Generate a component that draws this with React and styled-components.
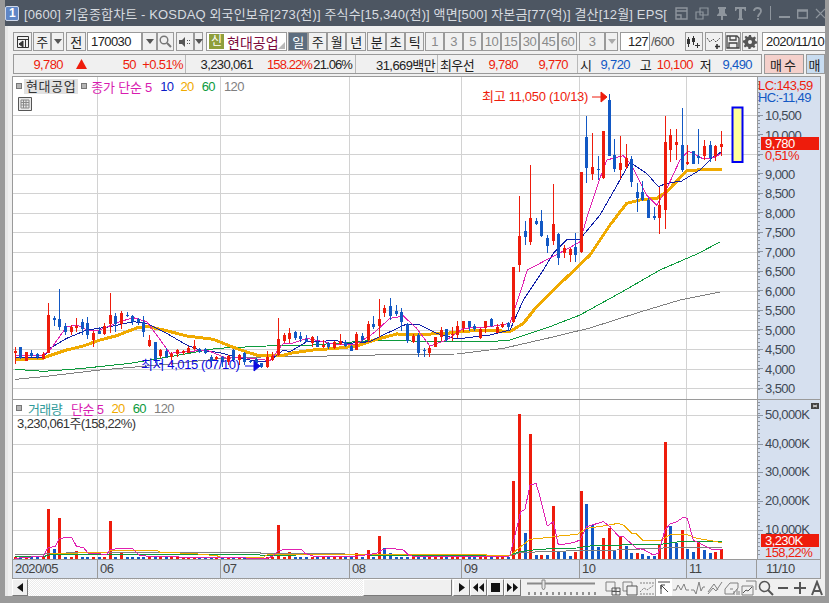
import React from 'react';
import styled, {createGlobalStyle} from 'styled-components';

const FONT = `"Liberation Sans", "Noto Sans CJK KR", sans-serif`;

const GlobalStyle = createGlobalStyle`
  html, body { margin: 0; padding: 0; background: #9a9a9a; }
  * { box-sizing: border-box; }
`;

// x, high, top, bottom, low, colour — read off the chart, grouped by crop origin
const CANDLE_GROUPS = [
  {ox: 0, oy: 270, rows: [
    [46,232,243,248,283,'r'],[61,230,232,265,268,'b'],[79,245,247,272,272,'r'],[94,240,250,258,262,'b'],[112,250,253,262,266,'b'],
    [130,245,252,266,268,'r'],[145,99,135,248,250,'r'],[163,138,144,150,168,'b'],[178,57,147,172,180,'b'],[196,158,167,186,195,'b'],
    [214,165,172,186,195,'r'],[229,145,168,175,187,'r'],[247,148,156,178,195,'b'],[262,142,159,196,207,'b'],[280,182,189,210,232,'r'],
    [298,172,183,192,192,'b'],[313,160,167,193,195,'r'],[331,69,136,163,190,'r'],[346,128,138,163,185,'b'],[364,124,129,163,178,'r'],
    [382,126,136,138,142,'b'],[397,135,139,157,165,'b'],[415,145,148,157,165,'b'],[430,138,155,186,200,'b'],[448,195,210,228,230,'r'],
    [466,216,216,272,280,'b'],[481,238,240,258,265,'r'],[499,233,243,262,265,'b'],[514,245,252,262,285,'r'],[532,238,240,253,262,'r'],
    [550,240,243,250,255,'r'],[565,228,235,248,250,'r'],[583,210,228,236,240,'r'],[598,233,236,246,250,'b'],[616,235,238,248,253,'b'],
    [634,254,262,272,290,'b'],[649,258,262,267,270,'r'],[667,258,260,275,290,'b'],[685,255,258,275,285,'r'],[700,238,240,270,275,'b'],
    [718,252,255,270,285,'r'],[733,246,250,277,285,'b'],[751,270,272,275,280,'b'],[769,265,268,280,285,'b'],[784,278,280,290,295,'b'],
    [802,243,262,290,295,'r'],[817,245,258,270,272,'r'],[835,143,207,255,258,'r'],[853,188,195,212,220,'r'],[868,175,190,206,220,'r'],
  ]},
  {ox: 290, oy: 270, rows: [
    [16,182,185,203,210,'b'],[31,186,198,208,216,'b'],[49,196,206,216,216,'b'],[67,198,200,218,232,'r'],[82,198,216,230,232,'b'],
    [100,210,224,230,234,'r'],[115,216,218,232,238,'b'],[133,212,216,234,238,'r'],[151,192,214,222,225,'r'],[166,210,216,228,230,'b'],
    [184,224,228,242,244,'b'],[199,186,192,240,240,'r'],[217,190,198,210,215,'b'],[235,153,162,210,215,'r'],[250,138,162,172,178,'b'],
    [268,87,147,168,200,'r'],[283,105,114,130,140,'r'],[301,84,108,138,150,'b'],[319,105,122,132,138,'b'],[334,114,126,155,183,'b'],
    [352,160,162,214,218,'b'],[370,193,198,216,220,'r'],[385,188,196,250,262,'b'],[403,235,240,243,262,'b'],[418,228,234,250,260,'r'],
    [436,200,202,231,232,'r'],[454,172,180,200,214,'r'],[469,176,178,210,216,'b'],[487,172,192,196,214,'r'],[502,152,168,194,204,'r'],
    [520,152,154,174,186,'r'],[538,153,154,172,182,'b'],[553,162,169,176,184,'b'],[571,174,178,203,207,'r'],[586,154,154,174,190,'r'],
    [604,145,148,168,172,'b'],[622,162,170,188,190,'r'],[637,155,163,172,175,'r'],[655,155,158,172,184,'b'],[670,-9,-9,156,158,'r'],
  ]},
  {ox: 500, oy: 85, rows: [
    [58,333,453,540,560,'r'],[76,408,438,456,480,'b'],[91,240,400,470,480,'r'],[109,400,408,416,420,'b'],[124,376,408,452,455,'b'],
    [142,450,460,482,505,'b'],[160,297,418,468,480,'r'],[175,445,447,520,540,'b'],[193,480,490,505,520,'r'],[211,490,492,510,530,'r'],
    [226,445,487,510,530,'b'],[244,262,262,500,505,'r'],[259,93,155,248,295,'b'],[277,145,245,267,285,'r'],[295,213,252,256,285,'b'],
    [310,138,138,280,282,'r'],[328,28,45,213,213,'b'],[343,162,210,252,262,'b'],[361,153,234,256,282,'r'],[379,178,218,246,252,'r'],
    [394,214,222,292,305,'b'],[412,295,321,340,380,'b'],[427,287,321,345,348,'b'],[445,340,345,398,400,'b'],[463,367,392,400,405,'b'],
    [478,305,360,398,446,'r'],[496,93,172,374,432,'r'],[511,133,150,194,230,'r'],[529,132,171,180,225,'r'],[547,69,180,256,262,'b'],
    [562,180,232,238,240,'r'],[580,198,198,236,238,'b'],[595,132,212,220,236,'b'],[613,165,183,212,225,'r'],[631,168,181,219,232,'b'],
    [646,180,183,214,228,'r'],[664,138,177,186,212,'r'],
  ]},
];

const CANDLES = CANDLE_GROUPS.flatMap(g =>
  g.rows.map(([x, h, t, b, l, c]) => ({
    x: Math.round(g.ox + x / 3),
    h: Math.round(g.oy + h / 3),
    t: Math.round(g.oy + t / 3),
    b: Math.round(g.oy + b / 3),
    l: Math.round(g.oy + l / 3),
    c,
  }))
);

const COLORS = {r: '#ee1c0c', b: '#1258c4'};

const toPoints = (ox, oy, list) => list.map(([x, y]) => `${ox + x / 3},${oy + y / 3}`).join(' ');

const line = (...parts) => parts.map(([ox, oy, list]) => toPoints(ox, oy, list)).join(' ');

const MA5 = line(
  [0, 270, [[46,255],[130,255],[150,240],[200,170],[230,165],[260,180],[300,180],[360,155],[400,143],[440,155],[470,195],[510,250],[560,245],[620,240],[680,265],[720,262],[780,268],[810,272],[850,220]]],
  [290, 270, [[0,222],[50,205],[100,215],[140,225],[200,222],[250,190],[300,145],[340,138],[380,175],[420,228],[470,210],[520,175],[600,170],[660,160],[690,70],[712,0]]],
  [500, 85, [[205,490],[240,470],[260,400],[300,280],[320,225],[370,212],[395,240],[440,330],[470,360],[496,320],[540,225],[565,198],[610,222],[640,218],[665,205]]]
);
const MA10 = line(
  [0, 270, [[46,262],[130,262],[150,235],[200,205],[260,180],[330,170],[400,155],[440,160],[500,190],[560,225],[600,240],[660,248],[720,265],[780,275],[810,272],[850,240]]],
  [290, 270, [[0,245],[50,215],[140,212],[175,220],[240,215],[290,190],[350,162],[390,165],[440,190],[500,207],[600,195],[660,180],[700,90],[760,0]]],
  [500, 85, [[160,505],[200,465],[240,462],[300,390],[390,232],[440,265],[475,305],[500,295],[545,288],[600,255],[640,215],[665,200]]]
);
const MA20 = line(
  [0, 270, [[46,268],[130,265],[145,258],[200,240],[250,228],[300,210],[350,197],[415,172],[445,170],[500,182],[560,198],[640,208],[700,232],[740,246],[780,258],[850,256]]],
  [290, 270, [[0,250],[70,240],[140,235],[200,228],[260,208],[320,192],[400,193],[470,190],[520,184],[600,180],[660,185],[700,160],[740,110],[780,70]]],
  [500, 85, [[270,510],[330,420],[380,355],[420,345],[470,340],[500,320],[560,258],[620,252],[665,252]]]
);
const MA60 = line(
  [0, 270, [[46,298],[130,304],[240,296],[390,280],[510,260],[650,235],[800,228]]],
  [290, 270, [[0,226],[70,225],[240,212],[600,215],[660,210],[780,170]]],
  [0, 0, [[1740,945],[1860,879],[1980,810],[2091,762],[2160,726]]]
);
const MA120 = line(
  [0, 270, [[46,328],[130,320],[300,300],[500,283],[700,262]]],
  [290, 270, [[0,260],[170,257],[340,253],[500,252],[640,235],[780,203]]],
  [0, 0, [[1770,984],[1920,936],[2040,900],[2160,876]]]
);

const V5 = line(
  [0, 390, [[46,505],[130,498],[145,472],[165,470],[178,445],[215,442],[230,470],[250,472],[265,490],[320,493],[330,480],[355,475],[398,476],[420,497],[470,500],[800,505],[820,498],[835,482],[860,478],[905,478],[915,490],[945,500],[1060,500],[1130,490],[1150,478],[1175,475],[1210,480],[1228,497]]],
  [410, 390, [[20,500],[295,500],[300,495],[325,395],[332,365],[345,358],[360,285],[378,280],[390,320],[412,408],[430,395],[445,465],[490,458],[510,450],[530,410],[580,395],[600,410],[625,438],[640,440],[680,475],[700,478],[730,495],[745,490],[765,420],[780,402],[800,395],[820,382],[832,385],[850,450],[880,465],[910,480],[935,478]]]
);
const V20 = line(
  [0, 390, [[150,490],[320,488],[330,483],[400,480],[468,480],[480,487],[570,490],[650,497],[665,503],[790,502],[800,495],[1230,494]]],
  [410, 390, [[205,494],[300,498],[320,480],[360,448],[420,442],[460,436],[500,434],[530,415],[580,408],[625,400],[640,405],[665,430],[680,432],[700,452],[750,452],[780,435],[830,433],[860,445],[905,452],[935,458]]]
);
const V60 = line(
  [0, 390, [[46,500],[130,500],[150,494],[300,494],[500,494],[770,493],[790,497],[990,493],[1230,497]]],
  [410, 390, [[295,497],[330,485],[370,480],[420,476],[500,474],[540,468],[670,464],[760,462],[800,456],[935,455]]]
);
const V120 = line(
  [0, 390, [[46,493],[130,493],[140,490],[320,487],[410,488],[780,488],[780,491],[995,491],[1230,497]]],
  [410, 390, [[300,497],[330,488],[420,484],[620,480],[760,474],[935,472]]]
);

// big volume bars: x, top, colour. everything else is a stub of 2-3px
const BIG_BARS = [
  ...[[145,357,'r'],[163,477,'b'],[178,384,'r'],[229,484,'r'],[331,393,'r'],[364,490,'r'],[835,405,'r'],[868,487,'r'],[1069,490,'r'],[1105,480,'r'],[1138,438,'r'],[1153,475,'b'],[1171,490,'b']]
    .map(([x, t, c]) => [x / 3, Math.round(390 + t / 3), c]),
  ...[[310,273,'r'],[328,72,'r'],[346,429,'b'],[361,132,'r'],[379,495,'b'],[394,495,'r'],[412,495,'b'],[430,348,'r'],[445,485,'b'],[463,485,'b'],[478,497,'b'],[496,485,'r'],[514,303,'r'],[529,342,'b'],[547,405,'b'],[565,470,'b'],[580,444,'r'],[598,413,'r'],[613,482,'b'],[631,438,'r'],[649,467,'b'],[664,489,'b'],[682,489,'r'],[697,492,'b'],[715,497,'b'],[733,497,'b'],[748,464,'r'],[766,156,'r'],[781,408,'b'],[799,459,'b'],[817,420,'r'],[832,477,'b'],[850,486,'b'],[865,456,'r'],[883,480,'b'],[901,489,'b'],[916,486,'r'],[934,477,'r']]
    .map(([x, t, c]) => [410 + x / 3, Math.round(390 + t / 3), c]),
];

const VOLUMES = CANDLES.map(k => {
  const big = BIG_BARS.find(([x]) => Math.abs(x - k.x) < 3);
  return big ? {x: k.x, top: big[1], c: big[2]} : {x: k.x, top: 557, c: k.c};
});

const GRID_X = [97, 220, 349, 461, 579, 686];
const PRICE_TICKS = ['10,500','10,000','9,500','9,000','8,500','8,000','7,500','7,000','6,500','6,000','5,500','5,000','4,500','4,000','3,500'];
const priceY = i => 115 + i * 19.5;
const VOL_TICKS = [[415,'50,000K'],[444,'40,000K'],[472,'30,000K'],[501,'20,000K'],[530,'10,000K']];

const Window = styled.div`
  width: 829px;
  height: 603px;
  overflow: hidden;
  display: flex;
  flex-direction: column;
  background: #f0f0f0;
  border: solid #9a9a9a;
  border-width: 0 4px 7px 5px;
  font-family: ${FONT};
  font-size: 13px;
  letter-spacing: -0.6px;
  color: #222;
`;

const TitleBar = styled.div`
  height: 26px;
  flex: none;
  margin: 0 -4px 0 -5px;
  background: #4d5662;
  color: #d8dce0;
  display: flex;
  align-items: center;
  padding: 0 7px 0 5px;
`;

const AppBadge = styled.div`
  width: 14px;
  height: 15px;
  border: 1px solid #cfd8ea;
  border-radius: 2px;
  background: #5f86c6;
  color: #fff;
  font-weight: 700;
  font-size: 12px;
  line-height: 13px;
  text-align: center;
  flex: none;
`;

const TitleText = styled.div`
  width: 645px;
  margin-left: 5px;
  flex: none;
  white-space: nowrap;
  overflow: hidden;
  font-size: 13px;
  letter-spacing: 0.14px;
`;

const TitleIcons = styled.div`
  display: flex;
  align-items: center;
  margin-left: 6px;
  gap: 7px;
  color: #8e959d;
`;

const TitleSep = styled.div`
  width: 1px;
  height: 14px;
  background: #8e959d;
  margin: 0 1px;
`;

const Body = styled.div`
  flex: 1;
  min-height: 0;
  display: flex;
  flex-direction: column;
  padding: 4px 0 0 4px;
  border-left: 3px solid #e8e8e8;
`;

const Toolbar = styled.div`
  height: 19px;
  margin: 2px 0 0 1px;
  flex: none;
  display: flex;
  align-items: stretch;
  gap: 1px;
  white-space: nowrap;
`;

const Btn = styled.div`
  width: ${p => p.$w}px;
  margin-left: ${p => p.$ml ?? 0}px;
  flex: none;
  display: flex;
  align-items: center;
  justify-content: center;
  background: ${p => (p.$active ? '#5d6d7f' : '#f0f0f0')};
  color: ${p => (p.$active ? '#fff' : p.$muted ? '#8a8a8a' : '#222')};
  border: 1px solid #9a9a9a;
`;

const BtnGroup = styled.div`
  display: flex;
  margin-left: ${p => p.$ml ?? 0}px;
`;

const Field = styled.div`
  width: ${p => p.$w}px;
  margin-left: ${p => p.$ml ?? 0}px;
  flex: none;
  background: #fff;
  border: 1px solid #9a9a9a;
  display: flex;
  align-items: center;
  justify-content: ${p => (p.$right ? 'flex-end' : 'flex-start')};
  padding: 0 ${p => (p.$right ? 1 : 3)}px;
  overflow: hidden;
`;

const StockField = styled(Field)`
  position: relative;
  padding: 0 2px;
  gap: 3px;
  color: #7c0a3c;
  font-size: 14px;
  letter-spacing: 0;
  &::after {
    content: '';
    position: absolute;
    right: 1px;
    bottom: 1px;
    border-style: solid;
    border-width: 0 0 7px 7px;
    border-color: transparent transparent #b8b8b8 transparent;
  }
`;

const NewChip = styled.span`
  width: 15px;
  height: 15px;
  background: #8f9f3c;
  color: #fff;
  font-size: 12px;
  line-height: 15px;
  text-align: center;
`;

const Caret = styled.span`
  width: 0;
  height: 0;
  border: 4px solid transparent;
  border-top: 5px solid ${p => p.$color ?? '#555'};
  border-bottom: 0;
`;

const Slash = styled.span`
  width: 32px;
  flex: none;
  align-self: center;
  color: #555;
`;

const InfoBar = styled.div`
  height: 20px;
  margin: 3px 0 0 1px;
  flex: none;
  display: flex;
`;

const InfoPanel = styled.div`
  width: 749px;
  flex: none;
  display: flex;
  border: 1px solid #9a9a9a;
`;

const InfoCell = styled.div`
  width: ${p => p.$w}px;
  flex: none;
  display: flex;
  align-items: center;
  white-space: nowrap;
  & + & { border-left: 1px solid #b8b8b8; }
`;

const InfoVal = styled.span`
  width: ${p => p.$w}px;
  margin-left: ${p => p.$ml ?? 0}px;
  flex: none;
  text-align: ${p => (p.$left ? 'left' : 'right')};
  letter-spacing: ${p => (p.$tight ? -0.9 : -0.6)}px;
  color: ${p => (p.$c === 'r' ? '#ee1c0c' : p.$c === 'b' ? '#1258c4' : '#222')};
`;

const UpArrow = styled.svg`
  margin-left: 13px;
  flex: none;
`;

const TradeBtn = styled.div`
  width: ${p => p.$w}px;
  margin-left: 2px;
  flex: none;
  border: 1px solid #9a9a9a;
  background: ${p => p.$bg};
  display: flex;
  align-items: center;
  justify-content: center;
  letter-spacing: 2px;
`;

const Chart = styled.div`
  width: 809px;
  margin-top: 2px;
  flex: none;
  border-top: 1px solid #9a9a9a;
  border-left: 1px solid #9a9a9a;
`;

const Pane = styled.div`
  display: flex;
  height: ${p => p.$h}px;
  border-bottom: 1px solid #9a9a9a;
`;

const Plot = styled.div`
  position: relative;
  width: 744px;
  flex: none;
  background: #fff;
`;

const Axis = styled.div`
  flex: 1;
  background: #d6e0ef;
  border-left: 1px solid #9a9a9a;
  border-right: 1px solid #9a9a9a;
`;

const Drawing = styled.svg`
  display: block;
  font-family: ${FONT};
  font-size: 13px;
  letter-spacing: -0.6px;
`;

const Legend = styled.div`
  position: absolute;
  left: 3px;
  top: ${p => p.$top}px;
  height: 16px;
  display: flex;
  align-items: center;
  white-space: nowrap;
`;

const LegendMark = styled.span`
  width: 6px;
  height: 6px;
  background: #b4b4b4;
  border: 1px solid #777;
  margin-right: 2px;
`;

const LegendName = styled.span`
  height: 15px;
  line-height: 15px;
  padding: 0 2px;
  margin-right: 3px;
  background: #e2e2e2;
  letter-spacing: 0.6px;
  color: #333;
`;

const LegendText = styled.span`
  margin-left: ${p => p.$ml ?? 0}px;
  letter-spacing: ${p => p.$ls ?? -0.6}px;
  color: ${p => p.$c};
`;

const ReadOut = styled.div`
  position: absolute;
  left: 4px;
  top: 13px;
  color: #333;
`;

const GridIcon = styled.svg`
  position: absolute;
  left: 5px;
  top: 20px;
`;

const DateRow = styled.div`
  display: flex;
  height: 19px;
  background: #d6e0ef;
  border-bottom: 1px solid #9a9a9a;
  border-right: 1px solid #9a9a9a;
`;

const DateCell = styled.div`
  width: ${p => p.$w}px;
  flex: none;
  padding-left: ${p => p.$pl ?? 2}px;
  line-height: 17px;
  color: #444;
  & + & { border-left: 1px solid #9a9a9a; }
`;

const BottomBar = styled.div`
  height: 17px;
  flex: none;
  display: flex;
  align-items: stretch;
`;

const ScrollBtn = styled.div`
  width: ${p => p.$w ?? 16}px;
  margin-left: ${p => p.$ml ?? 0}px;
  flex: none;
  background: #f0f0f0;
  border: 1px solid;
  border-color: #fff #7a7a7a #7a7a7a #fff;
  display: flex;
  align-items: center;
  justify-content: center;
`;

const ScrollTrack = styled.div`
  width: ${p => p.$w}px;
  flex: none;
  background: repeating-conic-gradient(#fff 0 25%, #ebebeb 0 50%) 0 0 / 2px 2px;
`;

const SliderWrap = styled.div`
  margin-left: 6px;
  flex: none;
`;

const BottomIcons = styled.div`
  display: flex;
  align-items: center;
  margin-left: 7px;
`;

const IconSlot = styled.div`
  width: 17px;
  height: 17px;
  flex: none;
  display: flex;
  align-items: center;
  justify-content: center;
  background: ${p => (p.$active ? '#fff' : 'transparent')};
  border-left: ${p => (p.$active ? '1px solid #aaa' : '0')};
`;

function Candles() {
  return CANDLES.map((k, i) => (
    <g key={i} fill={COLORS[k.c]} stroke="none" shapeRendering="crispEdges">
      <rect x={k.x} y={k.h} width={1} height={Math.max(k.l - k.h, 1)} />
      <rect x={k.x - 1} y={k.t} width={3} height={Math.max(k.b - k.t, 1)} />
    </g>
  ));
}

function GridLines({top, bottom, rows}) {
  return (
    <g stroke="#d2d2d2" strokeWidth="1" shapeRendering="crispEdges">
      {GRID_X.map(x => <line key={x} x1={x + 0.5} x2={x + 0.5} y1={top} y2={bottom} />)}
      {rows.map(y => <line key={y} x1={13} x2={757} y1={y} y2={y} />)}
    </g>
  );
}

const Trace = ({points, color, width = 1}) => (
  <polyline points={points} fill="none" stroke={color} strokeWidth={width} shapeRendering="crispEdges" />
);

function PriceChart() {
  const rows = PRICE_TICKS.map((_, i) => Math.round(priceY(i)) + 0.5);
  return (
    <Drawing width="744" height="322" viewBox="13 77 744 322">
      <GridLines top={77} bottom={399} rows={rows} />
      <Trace points={MA120} color="#808080" />
      <Trace points={MA60} color="#0c9a3c" />
      <Trace points={MA20} color="#f0aa00" width={3} />
      <Trace points={MA10} color="#1020a8" />
      <Trace points={MA5} color="#e020b0" />
      <Candles />
      <rect x="732.5" y="107.5" width="10" height="54.5" fill="#ffff99" stroke="#0000f0" strokeWidth="2" />
      <text x="482" y="101" fill="#ee1c0c" letterSpacing="-0.3">최고 11,050 (10/13)</text>
      <path d="M592 97h10M601 92v10l6-5z" stroke="#ee1c0c" fill="#ee1c0c" />
      <text x="141" y="369" fill="#0a0ae0" letterSpacing="-0.4">최저 4,015 (07/10)</text>
      <path d="M245 366h10M254 361v10l6-5z" stroke="#0a0ae0" fill="#0a0ae0" />
    </Drawing>
  );
}

function VolumeChart() {
  return (
    <Drawing width="744" height="159" viewBox="13 400 744 159">
      <GridLines top={400} bottom={559} rows={[415.5, 444.5, 472.5, 501.5, 530.5]} />
      {VOLUMES.map((v, i) => (
        <rect key={i} x={v.x - 1} y={v.top} width={3} height={559 - v.top} fill={COLORS[v.c]} shapeRendering="crispEdges" />
      ))}
      <Trace points={V120} color="#808080" />
      <Trace points={V60} color="#0c9a3c" />
      <Trace points={V20} color="#f0aa00" />
      <Trace points={V5} color="#e020b0" />
    </Drawing>
  );
}

function PriceAxis() {
  const minor = Array.from({length: 80}, (_, i) => 81 + i * 3.9);
  return (
    <Drawing width="62" height="322" viewBox="758 77 62 322">
      <g stroke="#8c96a4" shapeRendering="crispEdges">
        {minor.map(y => <line key={y} x1={758} x2={760} y1={y} y2={y} />)}
        {PRICE_TICKS.map((_, i) => <line key={i} x1={758} x2={763} y1={priceY(i)} y2={priceY(i)} />)}
      </g>
      {PRICE_TICKS.map((t, i) => t !== '9,500' && (
        <text key={t} x={765} y={priceY(i) + 5} fill="#3e4854">{t}</text>
      ))}
      <text x={758} y={90} fill="#ee1c0c">LC:143,59</text>
      <text x={758} y={102} fill="#1258c4">HC:-11,49</text>
      <rect x={761} y={137} width={58} height={13} fill="#ee1c0c" />
      <text x={765} y={148} fill="#fff">9,780</text>
      <text x={765} y={160} fill="#ee1c0c">0,51%</text>
    </Drawing>
  );
}

function VolumeAxis() {
  const minor = Array.from({length: 40}, (_, i) => 402 + i * 3.9);
  return (
    <Drawing width="62" height="159" viewBox="758 400 62 159">
      <g stroke="#8c96a4" shapeRendering="crispEdges">
        {minor.map(y => <line key={y} x1={758} x2={760} y1={y} y2={y} />)}
        {VOL_TICKS.map(([y]) => <line key={y} x1={758} x2={763} y1={y} y2={y} />)}
      </g>
      {VOL_TICKS.map(([y, t]) => <text key={t} x={765} y={y + 4} fill="#3e4854">{t}</text>)}
      <rect x={811} y={403} width={8} height={6} fill="#444" />
      <path d="M813 405l4 2M817 405l-4 2" stroke="#ddd" />
      <rect x={761} y={534} width={58} height={13} fill="#ee1c0c" />
      <text x={765} y={545} fill="#fff">3,230K</text>
      <text x={765} y={557} fill="#ee1c0c">158,22%</text>
    </Drawing>
  );
}

const Tool = ({children, w = 16, active}) => (
  <IconSlot $active={active}>
    <svg width={w} height="16" viewBox={`0 0 ${w} 16`} fill="none" stroke="#808080" strokeWidth="1">
      {children}
    </svg>
  </IconSlot>
);

function WindowIcons() {
  return (
    <TitleIcons>
      <svg width="13" height="13" viewBox="0 0 13 13" fill="none" stroke="currentColor" strokeWidth="1.4"><path d="M1 1h11v11H1zM1 4h11M1 8h5v4" /></svg>
      <svg width="14" height="13" viewBox="0 0 14 13" fill="none" stroke="currentColor" strokeWidth="1.2"><path d="M5 1h8v7H5zM1 5h7v7H1z" /></svg>
      <svg width="12" height="13" viewBox="0 0 12 13" fill="currentColor"><path d="M2 0h8v2H9v4l2 2v1H7v4H5V9H1V8l2-2V2H2z" /></svg>
      <svg width="11" height="13" viewBox="0 0 11 13" fill="currentColor"><path d="M0 0h11v4h-1L9 2H7v9l1 1v1H3v-1l1-1V2H2L1 4H0z" /></svg>
      <svg width="9" height="13" viewBox="0 0 9 13" fill="none" stroke="currentColor" strokeWidth="1.8"><path d="M1 4c0-4 7-4 7 0 0 3-3 3-3 6M5 11v2" /></svg>
      <TitleSep />
      <svg width="11" height="13" viewBox="0 0 11 13" fill="currentColor"><path d="M0 9h11v2H0z" /></svg>
      <svg width="11" height="13" viewBox="0 0 11 13" fill="none" stroke="currentColor" strokeWidth="1.4"><path d="M.7 3h9.6v8H.7zM.7 4h9.6" /></svg>
      <svg width="11" height="13" viewBox="0 0 11 13" fill="none" stroke="currentColor" strokeWidth="1.2"><path d="M1 2l9 9M10 2l-9 9" /></svg>
    </TitleIcons>
  );
}

function TopToolbar() {
  return (
    <Toolbar>
      <Btn $w={19}>
        <svg width="14" height="14" viewBox="0 0 14 14" fill="none" stroke="#333"><path d="M1.500 1.500h11v11h-11zM1.500 4.500h11M9.500 4.500v8" /><path d="M3 9l4-3v6z" fill="#333" /></svg>
      </Btn>
      <BtnGroup>
        <Btn $w={18}>주</Btn>
        <Btn $w={13}><Caret /></Btn>
      </BtnGroup>
      <Btn $w={20} $ml={1}>전</Btn>
      <BtnGroup>
        <Field $w={55}>170030</Field>
        <Btn $w={15}><Caret /></Btn>
        <Btn $w={17}>
          <svg width="13" height="13" viewBox="0 0 13 13" fill="none" stroke="#777" strokeWidth="1.4"><circle cx="5" cy="5" r="3.8" /><path d="M8 8l4 4" strokeWidth="2" /></svg>
        </Btn>
      </BtnGroup>
      <BtnGroup $ml={1}>
        <Btn $w={18}>
          <svg width="12" height="12" viewBox="0 0 12 12" fill="#555"><path d="M0 4h3l3-3v10L3 8H0zM8 4h1v1H8zM8 7h1v1H8zM10 4h1v1h-1zM10 7h1v1h-1z" /></svg>
        </Btn>
        <Btn $w={9}><Caret /></Btn>
      </BtnGroup>
      <StockField $w={81} $ml={2}><NewChip>신</NewChip>현대공업</StockField>
      <BtnGroup>
        <Btn $w={20} $active>일</Btn>
        <Btn $w={19}>주</Btn>
        <Btn $w={19}>월</Btn>
        <Btn $w={20}>년</Btn>
      </BtnGroup>
      <BtnGroup>
        <Btn $w={19}>분</Btn>
        <Btn $w={19}>초</Btn>
        <Btn $w={19}>틱</Btn>
      </BtnGroup>
      <BtnGroup>
        {['1', '3', '5', '10', '15', '30', '45', '60'].map(n => <Btn key={n} $w={19} $muted>{n}</Btn>)}
      </BtnGroup>
      <BtnGroup $ml={1}>
        <Btn $w={26} $muted>3</Btn>
        <Btn $w={13}><Caret $color="#aaa" /></Btn>
      </BtnGroup>
      <Field $w={30} $right $ml={1}>127</Field>
      <Slash>/600</Slash>
      <Btn $w={18} $ml={1}>
        <svg width="16" height="14" viewBox="0 0 16 14" fill="#333"><path d="M2 2h1v2h1v5H3v3H2V9H1V4h1zM7 1h1v2h1v4H8v3H7V7H6V3h1zM11 8h1v2h2v1h-2v2h-1v-2H9v-1h2z" /></svg>
      </Btn>
      <Btn $w={18} $ml={1}>
        <svg width="16" height="14" viewBox="0 0 16 14" fill="none" stroke="#555"><path d="M1 3l3 4 3-3 3 3 4-4" strokeDasharray="2 1" /><path d="M11 9v5M9 11.500h5" strokeWidth="1.6" stroke="#333" /></svg>
      </Btn>
      <Btn $w={16} $ml={1}>
        <svg width="14" height="14" viewBox="0 0 14 14" fill="none" stroke="#444" strokeWidth="1.3"><path d="M1 1h10l2 2v10H1zM4 1v4h6V1M3 13V8h8v5" /></svg>
      </Btn>
      <Btn $w={16}>
        <svg width="14" height="14" viewBox="0 0 14 14" fill="#555"><path d="M6 0h2l.4 2 1.500.6L11.600 1.500 13 3l-1.100 1.600.6 1.500 1.500.4v2l-2 .4-.6 1.500L12.500 11.600 11 13l-1.600-1.100-1.500.6L7.500 14h-2l-.4-2-1.500-.6L2 12.500.8 11l1.100-1.600-.6-1.500L0 7.500v-2l2-.4.6-1.500L1.500 2 3 .8l1.600 1.100L5.600 1.500zM7 5a2 2 0 100 4 2 2 0 000-4z" /></svg>
      </Btn>
      <Field $w={64} $ml={3}>2020/11/10</Field>
    </Toolbar>
  );
}

function QuoteBar() {
  return (
    <InfoBar>
      <InfoPanel>
        <InfoCell $w={171}>
          <InfoVal $w={49} $c="r">9,780</InfoVal>
          <UpArrow width="11" height="10" viewBox="0 0 11 10"><path d="M5.500 0L11 10H0z" fill="#ee1c0c" /></UpArrow>
          <InfoVal $w={49} $c="r">50</InfoVal>
          <InfoVal $w={47} $c="r">+0.51%</InfoVal>
        </InfoCell>
        <InfoCell $w={170}>
          <InfoVal $w={67}>3,230,061</InfoVal>
          <InfoVal $w={59} $c="r" $tight>158.22%</InfoVal>
          <InfoVal $w={40} $tight>21.06%</InfoVal>
        </InfoCell>
        <InfoCell $w={82}>
          <InfoVal $w={79}>31,669백만</InfoVal>
        </InfoCell>
        <InfoCell $w={140}>
          <InfoVal $w={38} $left $ml={2}>최우선</InfoVal>
          <InfoVal $w={40} $c="r">9,780</InfoVal>
          <InfoVal $w={50} $c="r">9,770</InfoVal>
        </InfoCell>
        <InfoCell $w={184}>
          <InfoVal $w={12} $left $ml={2}>시</InfoVal>
          <InfoVal $w={38} $c="b">9,720</InfoVal>
          <InfoVal $w={21}>고</InfoVal>
          <InfoVal $w={42} $c="r">10,100</InfoVal>
          <InfoVal $w={18}>저</InfoVal>
          <InfoVal $w={41} $c="b">9,490</InfoVal>
        </InfoCell>
      </InfoPanel>
      <TradeBtn $w={40} $bg="#f4d0cb">매수</TradeBtn>
      <TradeBtn $w={19} $bg="#c8dcf0">매</TradeBtn>
    </InfoBar>
  );
}

function ScrollRow() {
  return (
    <BottomBar>
      <ScrollBtn><svg width="6" height="9"><path d="M6 0v9L0 4.500z" fill="#111" /></svg></ScrollBtn>
      <ScrollTrack $w={335} />
      <ScrollBtn $w={89} />
      <ScrollBtn $w={17} $ml={1}><svg width="6" height="9"><path d="M0 0v9l6-4.500z" fill="#111" /></svg></ScrollBtn>
      <ScrollBtn $w={17}><svg width="11" height="9"><path d="M5 0v9L0 4.500zM11 0v9L6 4.500z" fill="#111" /></svg></ScrollBtn>
      <ScrollBtn $w={17}><svg width="9" height="9"><path d="M0 0h9v9H0z" fill="#111" /></svg></ScrollBtn>
      <ScrollBtn $w={17}><svg width="11" height="9"><path d="M0 0v9l5-4.500zM6 0v9l5-4.500z" fill="#111" /></svg></ScrollBtn>
      <SliderWrap>
        <svg width="70" height="17" viewBox="0 0 70 17">
          <path d="M0 4.500h68" stroke="#8a8a8a" strokeWidth="2" />
          <path d="M15 1h3v8l-1.500 2L15 9z" fill="#e8e8e8" stroke="#888" />
          <path d="M2 13v3M8 13v3M14 13v3M20 13v3M26 13v3M32 13v3M38 13v3M44 13v3M50 13v3M56 13v3M62 13v3M68 13v3" stroke="#333" />
        </svg>
      </SliderWrap>
      <BottomIcons>
        <Tool><path d="M1 2h9v9H1z" /><path d="M7 8h8v7H7zM11 8v7M7 11.500h8" stroke="#555" /></Tool>
        <Tool><path d="M1 2h9v9H1z" /><path d="M5 6h10v9H5z" stroke="#555" fill="#f0f0f0" /></Tool>
        <Tool><path d="M1 3h14M1 14h14M1 12l4-4 3 2 7-5" strokeDasharray="2 1" /></Tool>
        <Tool active><path d="M2 2h12M5 14V5M5 5l7 7M5 5h4M5 5v4" stroke="#444" /></Tool>
        <Tool><path d="M0 10h3l2-5 3 5 3-6 2 6h3" /></Tool>
        <Tool><path d="M1 10h3l2 4 3-12 2 9 2-4h2" /></Tool>
        <Tool><path d="M1 14l5-6 3 3 6-9M1 12l6-8 4 6" /></Tool>
        <Tool><path d="M1 9l5-6h8v5l-5 6H1zM6 9h3M10 15V11M13 15V9M15 15V11" /></Tool>
        <Tool><path d="M5 1h10v9M1 6h11v9H1z" /><path d="M2 13l3-3 2 1 4-4" stroke="#555" /></Tool>
        <Tool><circle cx="6.500" cy="6.500" r="5" stroke="#555" strokeWidth="1.500" /><path d="M10 10l5 5" stroke="#555" strokeWidth="2" /></Tool>
        <Tool w={12}><path d="M1 8h10" stroke="#555" strokeWidth="2" /></Tool>
        <Tool w={14}><path d="M1 8h12M7 2v12" stroke="#555" strokeWidth="2" /></Tool>
        <Tool w={12}><path d="M1 15L6 2l5 13M3 11h6" stroke="#555" strokeWidth="2" /></Tool>
      </BottomIcons>
    </BottomBar>
  );
}

export default function App() {
  return (
    <Window>
      <GlobalStyle />
      <TitleBar>
        <AppBadge>1</AppBadge>
        <TitleText>[0600] 키움종합차트 - KOSDAQ 외국인보유[273(천)] 주식수[15,340(천)] 액면[500] 자본금[77(억)] 결산[12월] EPS[</TitleText>
        <WindowIcons />
      </TitleBar>
      <Body>
        <TopToolbar />
        <QuoteBar />
        <Chart>
          <Pane $h={323}>
            <Plot>
              <PriceChart />
              <Legend $top={1}>
                <LegendMark />
                <LegendName>현대공업</LegendName>
                <LegendMark />
                <LegendText $ml={2} $ls={-0.2} $c="#d81cb0">종가 단순 5</LegendText>
                <LegendText $ml={8} $c="#0a1cc8">10</LegendText>
                <LegendText $ml={7} $c="#f0aa00">20</LegendText>
                <LegendText $ml={8} $c="#0c9a3c">60</LegendText>
                <LegendText $ml={9} $c="#808080">120</LegendText>
              </Legend>
              <GridIcon width="14" height="14" viewBox="0 0 14 14" fill="#e8e8e8" stroke="#555">
                <path d="M.5.5h13v13H.5z" />
                <path d="M3 3h8v8H3zM3 5.500h8M3 8h8M5.500 3v8M8 3v8" stroke="#888" />
              </GridIcon>
            </Plot>
            <Axis><PriceAxis /></Axis>
          </Pane>
          <Pane $h={160}>
            <Plot>
              <VolumeChart />
              <Legend $top={0}>
                <LegendMark />
                <LegendText $ml={4} $c="#2f9a9a">거래량</LegendText>
                <LegendText $ml={9} $c="#d81cb0">단순 5</LegendText>
                <LegendText $ml={8} $c="#f0aa00">20</LegendText>
                <LegendText $ml={8} $c="#0c9a3c">60</LegendText>
                <LegendText $ml={8} $c="#808080">120</LegendText>
              </Legend>
              <ReadOut>3,230,061주(158,22%)</ReadOut>
            </Plot>
            <Axis><VolumeAxis /></Axis>
          </Pane>
          <DateRow>
            <DateCell $w={84}>2020/05</DateCell>
            <DateCell $w={123}>06</DateCell>
            <DateCell $w={129}>07</DateCell>
            <DateCell $w={112}>08</DateCell>
            <DateCell $w={118}>09</DateCell>
            <DateCell $w={107}>10</DateCell>
            <DateCell $w={70}>11</DateCell>
            <DateCell $w={64} $pl={9}>11/10</DateCell>
          </DateRow>
        </Chart>
        <ScrollRow />
      </Body>
    </Window>
  );
}
